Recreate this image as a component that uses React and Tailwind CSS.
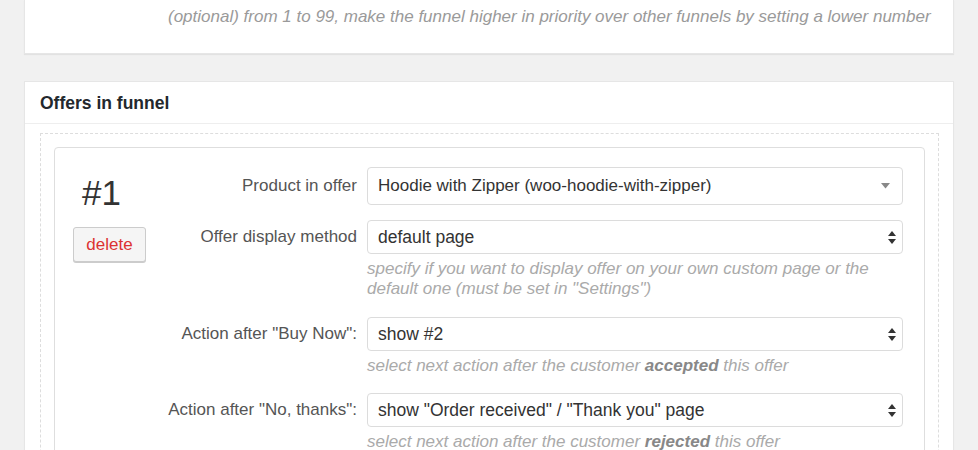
import React from "react";

const font = { fontFamily: '"Liberation Sans", Arial, sans-serif' };

function SingleArrow() {
  return (
    <svg width="9" height="6" viewBox="0 0 9 6" className="shrink-0">
      <path d="M0 0 L9 0 L4.5 5.5 Z" fill="#888" />
    </svg>
  );
}

function DoubleArrow() {
  return (
    <svg width="8" height="13" viewBox="0 0 8 13" className="shrink-0">
      <path d="M0 5 L4 0 L8 5 Z" fill="#333" />
      <path d="M0 8 L8 8 L4 13 Z" fill="#333" />
    </svg>
  );
}

function Select({ children, h, single }) {
  return (
    <div
      className={`flex items-center justify-between rounded-[4px] border border-[#dcdcdc] bg-white pl-[10px] ${single ? "pr-[12px]" : "pr-[6px]"} text-[17px] text-[#333] ${h}`}
    >
      <span>{children}</span>
      {single ? <SingleArrow /> : <DoubleArrow />}
    </div>
  );
}

function Row({ label, children, help, h, single, mb }) {
  return (
    <div className={`flex ${mb}`}>
      <div className="w-[221px] shrink-0 pr-[10px] text-right text-[17px] text-[#555]">
        <div className={`w-full flex items-center justify-end ${h}`}>{label}</div>
      </div>
      <div className="flex-1">
        <Select h={h} single={single}>{children}</Select>
        {help && (
          <div className="mt-[5px] text-[17px] italic leading-[20px] text-[#aaa]">{help}</div>
        )}
      </div>
    </div>
  );
}

export default function App() {
  return (
    <div className="min-h-[450px] bg-[#f1f1f1] px-[24px]" style={font}>
      <div className="h-[54px] bg-white shadow-[0_1px_1px_rgba(0,0,0,0.06)] border-x border-b border-[#e6e6e6] pt-[7px] pl-[143px]">
        <div className="text-[17px] italic leading-[20px] text-[#9a9a9a]">
          (optional) from 1 to 99, make the funnel higher in priority over other funnels by setting a lower number
        </div>
      </div>

      <div className="mt-[27px] bg-white border border-[#e6e6e6] shadow-[0_1px_1px_rgba(0,0,0,0.04)] h-[400px]">
        <div className="flex h-[42px] items-center border-b border-[#eeeeee] pl-[15px] pt-[1px] text-[17.5px] font-bold text-[#23282d]">
          Offers in funnel
        </div>
        <div className="ml-[15px] mr-[14px] mt-[9px] border border-dashed border-[#dddddd] p-[13px] h-[400px]">
          <div className="flex rounded-[4px] border border-[#dedede] bg-white pl-[18px] pr-[21px] pt-[19px] h-[400px]">
            <div className="w-[73px] shrink-0">
              <div className="mt-[6px] pl-[9px] text-[35px] leading-[40px] text-[#333]">#1</div>
              <button className="mt-[14px] flex h-[35px] w-[73px] items-center justify-center rounded-[3px] border border-[#cccccc] bg-[#f5f5f5] text-[17px] text-[#dc3232] shadow-[0_1px_0_#cccccc]">
                delete
              </button>
            </div>
            <div className="flex-1">
              <Row label="Product in offer" h="h-[38px]" single mb="mb-[15px]">
                Hoodie with Zipper (woo-hoodie-with-zipper)
              </Row>
              <Row
                label="Offer display method"
                h="h-[34px]"
                mb="mb-[18px]"
                help={'specify if you want to display offer on your own custom page or the default one (must be set in "Settings")'}
              >
                <span className="text-[17.5px]">default page</span>
              </Row>
              <Row
                label={'Action after "Buy Now":'}
                h="h-[34px]"
                mb="mb-[17px]"
                help={
                  <>
                    select next action after the customer{" "}
                    <b className="font-bold text-[#888]">accepted</b> this offer
                  </>
                }
              >
                <span className="text-[17.5px]">show #2</span>
              </Row>
              <Row
                label={'Action after "No, thanks":'}
                h="h-[34px]"
                mb="mb-[17px]"
                help={
                  <>
                    select next action after the customer{" "}
                    <b className="font-bold text-[#888]">rejected</b> this offer
                  </>
                }
              >
                <span className="text-[17.5px]">show "Order received" / "Thank you" page</span>
              </Row>
            </div>
          </div>
        </div>
      </div>
    </div>
  );
}
